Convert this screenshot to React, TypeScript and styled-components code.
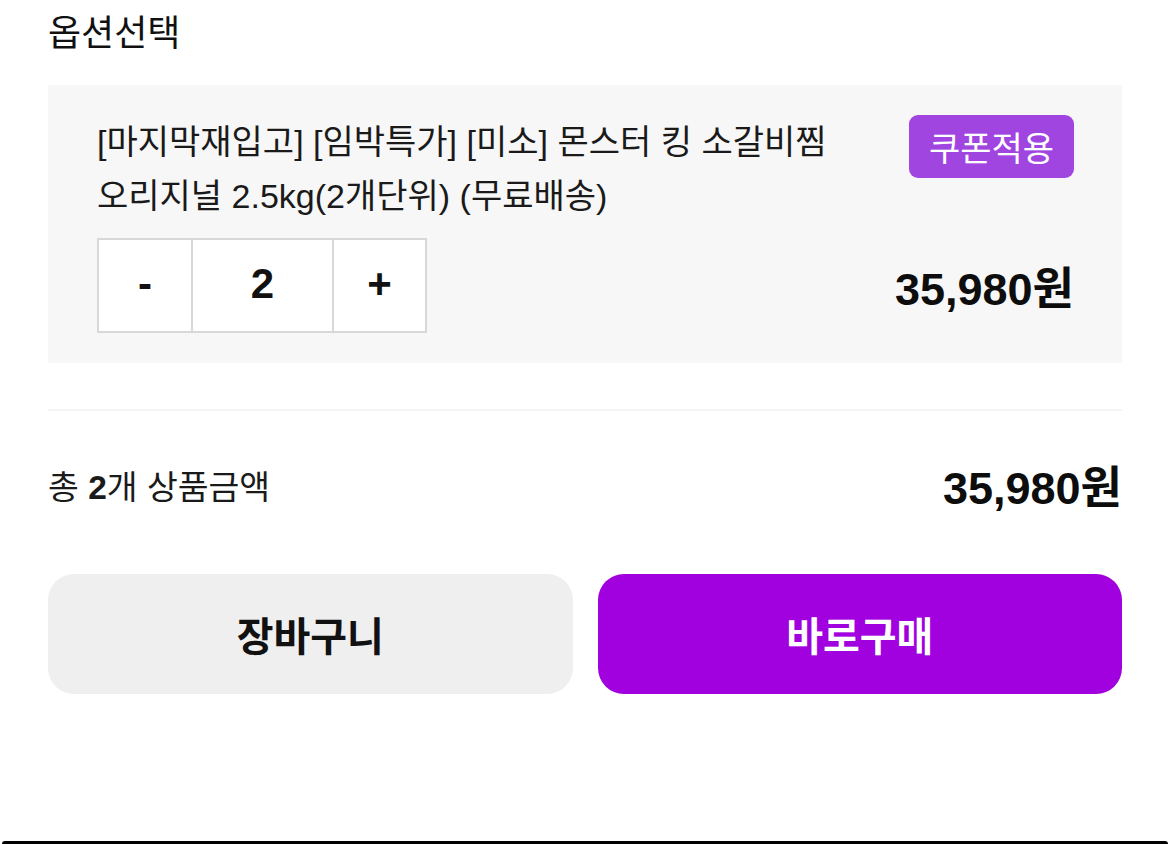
import React from "react";
import styled, { createGlobalStyle } from "styled-components";

const Global = createGlobalStyle`
  html, body { margin: 0; padding: 0; background: #ffffff; }
  body {
    font-family: "Liberation Sans", "Noto Sans CJK KR", sans-serif;
    color: #111111;
  }
  * { box-sizing: border-box; }
`;

const Page = styled.div`
  width: 1170px;
  height: 844px;
  display: flex;
  flex-direction: column;
  overflow: hidden;
`;

const Content = styled.div`
  padding: 0 48px;
  display: flex;
  flex-direction: column;
`;

const Title = styled.h2`
  margin: 0;
  height: 85px;
  display: flex;
  align-items: center;
  padding-bottom: 26px;
  font-size: 36px;
  font-weight: 400;
  color: #111;
`;

const OptionBox = styled.div`
  background: #f7f7f7;
  padding: 30px 48px 30px 49px;
  display: flex;
  flex-direction: column;
  gap: 15px;
`;

const TopRow = styled.div`
  display: flex;
  justify-content: space-between;
  align-items: flex-start;
  gap: 40px;
`;

const Name = styled.div`
  font-size: 34px;
  line-height: 54px;
  color: #1a1a1a;
`;

const Coupon = styled.button`
  flex: none;
  border: none;
  background: #a145e1;
  color: #ffffff;
  font-family: inherit;
  font-size: 34px;
  height: 63px;
  padding: 0 20px;
  border-radius: 9px;
`;

const BottomRow = styled.div`
  display: flex;
  justify-content: space-between;
  align-items: center;
`;

const Stepper = styled.div`
  display: flex;
  height: 95px;
  border: 2px solid #d8d8d8;
  background: #fff;
`;

const StepCell = styled.div<{ $w: number; $divider?: boolean }>`
  width: ${(p) => p.$w}px;
  display: flex;
  align-items: center;
  justify-content: center;
  padding-bottom: 4px;
  font-size: 42px;
  font-weight: 700;
  color: #111;
  border-left: ${(p) => (p.$divider ? "2px solid #d8d8d8" : "none")};
`;

const Price = styled.div<{ $size: number }>`
  font-size: ${(p) => p.$size}px;
  font-weight: 700;
  color: #0d0d0d;
`;

const Divider = styled.hr`
  margin: 46px 0 0;
  border: none;
  height: 2px;
  background: #f4f4f4;
`;

const Summary = styled.div`
  margin-top: 49px;
  height: 48px;
  display: flex;
  justify-content: space-between;
  align-items: center;
`;

const SummaryLabel = styled.div`
  font-size: 33.5px;
  color: #1a1a1a;
  b { font-weight: 700; }
`;

const Buttons = styled.div`
  margin-top: 66px;
  display: grid;
  grid-template-columns: 1fr 1fr;
  gap: 25px;
`;

const ActionButton = styled.button<{ $primary?: boolean }>`
  height: 120px;
  border: none;
  border-radius: 26px;
  background: ${(p) => (p.$primary ? "#a100df" : "#efefef")};
  color: ${(p) => (p.$primary ? "#ffffff" : "#111111")};
  font-family: inherit;
  font-size: 40px;
  font-weight: 700;
`;

const HomeBar = styled.div`
  margin-top: auto;
  margin-left: 2px;
  margin-right: 2px;
  height: 3px;
  background: #000;
  border-radius: 3px 3px 0 0;
`;

export default function App() {
  return (
    <Page>
      <Global />
      <Content>
        <Title>옵션선택</Title>
        <OptionBox>
          <TopRow>
            <Name>
              [마지막재입고] [임박특가] [미소] 몬스터 킹 소갈비찜
              <br />
              오리지널 2.5kg(2개단위) (무료배송)
            </Name>
            <Coupon>쿠폰적용</Coupon>
          </TopRow>
          <BottomRow>
            <Stepper>
              <StepCell $w={92}>-</StepCell>
              <StepCell $w={141} $divider>2</StepCell>
              <StepCell $w={93} $divider>+</StepCell>
            </Stepper>
            <Price $size={45}>35,980원</Price>
          </BottomRow>
        </OptionBox>
        <Divider />
        <Summary>
          <SummaryLabel>
            총 <b>2</b>개 상품금액
          </SummaryLabel>
          <Price $size={45}>35,980원</Price>
        </Summary>
        <Buttons>
          <ActionButton>장바구니</ActionButton>
          <ActionButton $primary>바로구매</ActionButton>
        </Buttons>
      </Content>
      <HomeBar />
    </Page>
  );
}
